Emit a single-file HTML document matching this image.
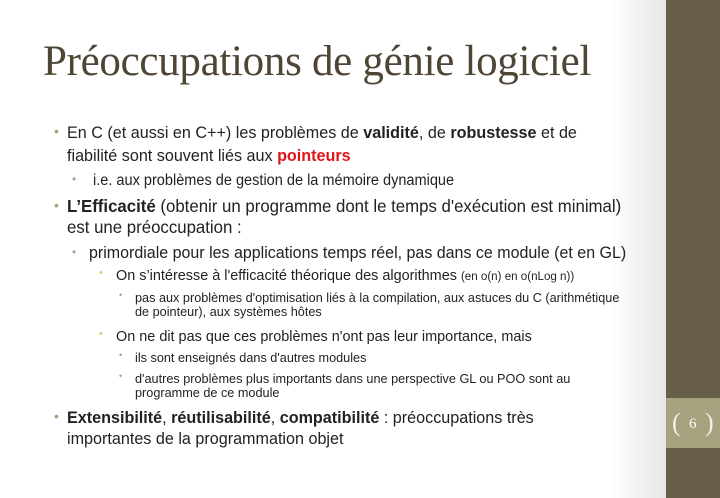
<!DOCTYPE html>
<html><head><meta charset="utf-8"><style>
body{margin:0;width:720px;height:498px;overflow:hidden;position:relative;font-family:"Liberation Sans",sans-serif;color:#222;
background:linear-gradient(to right,#fff 0,#fff 610px,#e6e6e6 666px);}
.band{position:absolute;left:666px;top:0;width:54px;height:498px;background:#675f49;}
.box{position:absolute;left:666px;top:398px;width:54px;height:50px;background:#a6a27f;color:#fff;font-family:"Liberation Serif",serif;font-size:15px;}
h1{position:absolute;left:43px;top:37px;margin:0;font-family:"Liberation Serif",serif;font-weight:normal;font-size:43px;color:#4e4534;white-space:nowrap;letter-spacing:-0.3px}
.l{position:absolute;white-space:nowrap;transform:scaleX(0.95);transform-origin:left top;line-height:1}
.b{position:absolute;line-height:1}
.s{font-size:12.2px}
.r{color:#e0151b;font-weight:bold}
</style></head><body>
<h1>Préoccupations de génie logiciel</h1>
<div class="band"></div>
<div class="box"><span style="position:absolute;left:6px;top:10px;font-size:26px;font-weight:100;color:#f4f1e4">(</span><span style="position:absolute;left:23px;top:18px">6</span><span style="position:absolute;left:39px;top:10px;font-size:26px;color:#f4f1e4">)</span></div>

<div class="b" style="left:54px;top:124px;color:#a6a27f;font-size:14px">•</div>
<div class="l" style="left:67px;top:124px;font-size:17px">En C (et aussi en C++) les problèmes de <b>validité</b>, de <b>robustesse</b> et de</div>
<div class="l" style="left:67px;top:147px;font-size:17px">fiabilité sont souvent liés aux <span class="r">pointeurs</span></div>
<div class="b" style="left:72px;top:173px;color:#9aa8ad;font-size:12px">•</div>
<div class="l" style="left:93px;top:173px;font-size:15.3px">i.e. aux problèmes de gestion de la mémoire dynamique</div>
<div class="b" style="left:54px;top:198px;color:#a6a27f;font-size:14px">•</div>
<div class="l" style="left:67px;top:198px;font-size:17.7px"><b>L’Efficacité</b> (obtenir un programme dont le temps d'exécution est minimal)</div>
<div class="l" style="left:67px;top:219px;font-size:17.7px">est une préoccupation :</div>
<div class="b" style="left:72px;top:246px;color:#9aa8ad;font-size:12px">•</div>
<div class="l" style="left:89px;top:245px;font-size:16.85px">primordiale pour les applications temps réel, pas dans ce module (et en GL)</div>
<div class="b" style="left:99px;top:268px;color:#d8cb6a;font-size:11px">•</div>
<div class="l" style="left:116px;top:268px;font-size:15.2px">On s’intéresse à l'efficacité théorique des algorithmes <span class="s">(en o(n) en o(nLog n))</span></div>
<div class="b" style="left:119px;top:291px;color:#a6a27f;font-size:9px">•</div>
<div class="l" style="left:135px;top:291px;font-size:13.35px">pas aux problèmes d'optimisation liés à la compilation, aux astuces du C (arithmétique</div>
<div class="l" style="left:135px;top:305px;font-size:13.35px">de pointeur), aux systèmes hôtes</div>
<div class="b" style="left:99px;top:329px;color:#d8cb6a;font-size:11px">•</div>
<div class="l" style="left:116px;top:329px;font-size:15.2px">On ne dit pas que ces problèmes n'ont pas leur importance, mais</div>
<div class="b" style="left:119px;top:351px;color:#a6a27f;font-size:9px">•</div>
<div class="l" style="left:135px;top:351px;font-size:13.35px">ils sont enseignés dans d'autres modules</div>
<div class="b" style="left:119px;top:372px;color:#a6a27f;font-size:9px">•</div>
<div class="l" style="left:135px;top:372px;font-size:13.35px">d'autres problèmes plus importants dans une perspective GL ou POO sont au</div>
<div class="l" style="left:135px;top:386px;font-size:13.35px">programme de ce module</div>
<div class="b" style="left:54px;top:409px;color:#a6a27f;font-size:14px">•</div>
<div class="l" style="left:67px;top:409px;font-size:17px"><b>Extensibilité</b>, <b>réutilisabilité</b>, <b>compatibilité</b> : préoccupations très</div>
<div class="l" style="left:67px;top:430px;font-size:17px">importantes de la programmation objet</div>
</body></html>
